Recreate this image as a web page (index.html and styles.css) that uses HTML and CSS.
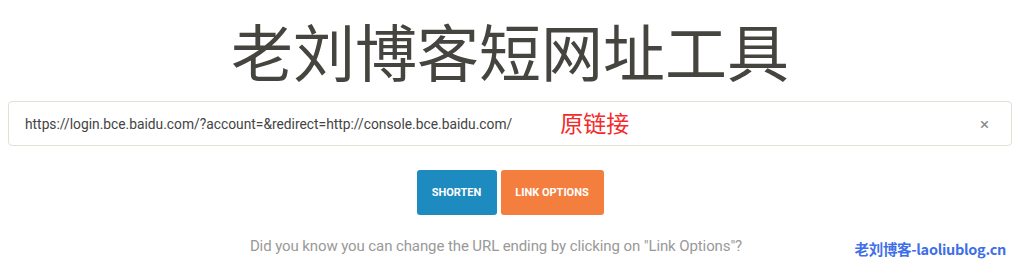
FILE: index.html
```html
<!DOCTYPE html>
<html lang="en">
<head>
    <meta charset="UTF-8">
    <meta name="viewport" content="width=device-width, initial-scale=1.0">
    <title>老刘博客短网址工具</title>
    <link rel="stylesheet" href="styles.css">
</head>
<body>
    <div class="page">
        <h1 class="title">老刘博客短网址工具</h1>
        <div class="urlBox">
            <span class="urlText">https://login.bce.baidu.com/?account=&amp;redirect=http://console.bce.baidu.com/</span>
            <span class="note">原链接</span>
            <span class="clear">&times;</span>
        </div>
        <div class="actions">
            <button class="btn btn-blue">SHORTEN</button>
            <button class="btn btn-orange">LINK OPTIONS</button>
        </div>
        <p class="hint">Did you know you can change the URL ending by clicking on "Link Options"?</p>
    </div>
    <div class="mark">老刘博客-laoliublog.cn</div>
</body>
</html>
```

FILE: styles.css
```css
body {
    margin: 0;
    background: #fff;
    font-family: Roboto, "Noto Sans CJK SC", sans-serif;
    position: relative;
    height: 273px;
    overflow: hidden;
}
.page {
    padding: 0 12px 0 8px;
}
.title {
    margin: 0;
    padding-top: 14px;
    height: 87px;
    box-sizing: border-box;
    text-align: center;
    font-family: "Noto Sans CJK SC", sans-serif;
    font-weight: normal;
    font-size: 62px;
    line-height: 72px;
    color: #45443f;
}
.urlBox {
    display: flex;
    align-items: center;
    height: 45px;
    box-sizing: border-box;
    border: 1px solid #e4dfd4;
    border-radius: 4px;
    padding: 0 22px 0 16px;
    margin-top: 14px;
    font-size: 13.8px;
    color: #444;
}
.note {
    margin-left: 48px;
    font-family: "Noto Sans CJK SC", sans-serif;
    font-size: 23px;
    color: #f52a2a;
    margin-top: -4px;
}
.clear {
    margin-left: auto;
    color: #888;
    font-size: 17px;
}
.actions {
    margin-top: 24px;
    text-align: center;
    font-size: 0;
}
.btn {
    height: 45px;
    border: none;
    border-radius: 3px;
    color: #fff;
    font-family: Roboto, sans-serif;
    font-weight: bold;
    font-size: 11px;
    padding: 0;
    white-space: nowrap;
    vertical-align: top;
    margin: 0 2px;
}
.btn-blue {
    background: #1e8bc0;
    width: 80px;
}
.btn-orange {
    background: #f47e3e;
    width: 103px;
}
.hint {
    margin: 22px 0 0;
    padding-right: 28px;
    text-align: center;
    color: #999;
    font-size: 15px;
    letter-spacing: -0.1px;
}
.mark {
    position: absolute;
    right: 18px;
    top: 238px;
    font-family: "Noto Sans CJK SC", sans-serif;
    font-weight: bold;
    font-size: 14.5px;
    letter-spacing: -0.3px;
    color: #3f6fe8;
}
```
